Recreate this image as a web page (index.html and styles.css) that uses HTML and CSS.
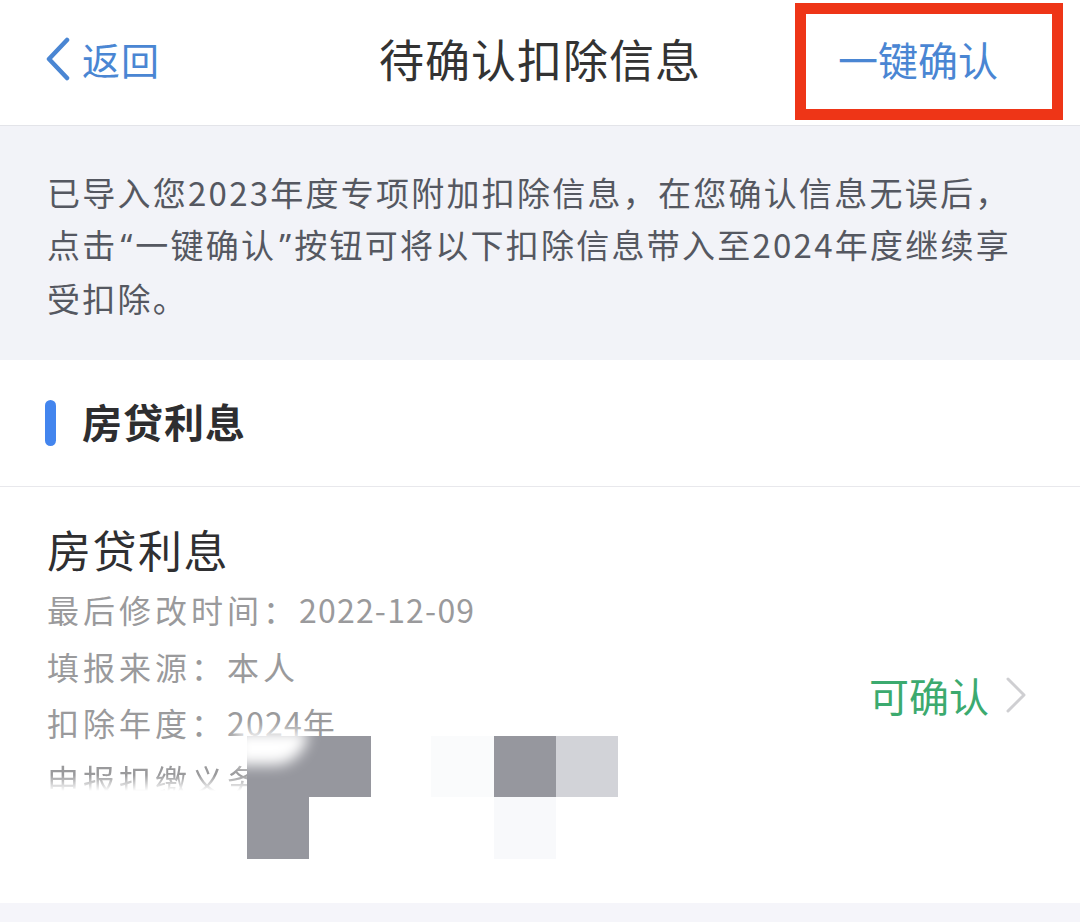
FILE: index.html
```html
<!DOCTYPE html>
<html lang="zh-CN">
<head>
<meta charset="utf-8">
<title>待确认扣除信息</title>
<link rel="stylesheet" href="styles.css">
</head>
<body>
<div class="page">
  <header class="navbar">
    <div class="nav-left">
      <svg class="back-icon" width="28" height="44" viewBox="0 0 28 44"><path d="M23 3 L5 22 L23 41" fill="none" stroke="#4a86d3" stroke-width="4.5" stroke-linecap="round" stroke-linejoin="round"/></svg>
      <span class="back-text">返回</span>
    </div>
    <div class="nav-title">待确认扣除信息</div>
    <div class="nav-right">
      <span class="confirm-all">一键确认</span>
    </div>
    <div class="highlight-box"></div>
  </header>

  <section class="notice">
    <div class="notice-line">已导入您2023年度专项附加扣除信息，在您确认信息无误后，</div>
    <div class="notice-line">点击<span class="q">“</span>一键确认<span class="q">”</span>按钮可将以下扣除信息带入至2024年度继续享</div>
    <div class="notice-line">受扣除。</div>
  </section>

  <section class="card">
    <div class="section-head">
      <span class="section-bar"></span>
      <span class="section-title">房贷利息</span>
    </div>
    <div class="item">
      <div class="item-body">
        <div class="item-title">房贷利息</div>
        <div class="item-line">最后修改时间：<span class="num">2022-12-09</span></div>
        <div class="item-line">填报来源：本人</div>
        <div class="item-line">扣除年度：<span class="num">2024</span>年</div>
        <div class="item-line item-cut">申报扣缴义务人：</div>
      </div>
      <div class="item-status">
        <span class="status-text">可确认</span>
        <svg class="chevron" width="22" height="36" viewBox="0 0 22 36"><path d="M3 2 L19 18 L3 34" fill="none" stroke="#cfcfd2" stroke-width="3" stroke-linecap="round" stroke-linejoin="round"/></svg>
      </div>
      <div class="mosaic">
        <span class="m m-a1"></span>
        <span class="m m-a2"></span>
        <span class="m m-smudge"></span>
        <span class="m m-b"></span>
        <span class="m m-c1"></span>
        <span class="m m-c2"></span>
        <span class="m m-d"></span>
      </div>
    </div>
  </section>
  <div class="footer-bg"></div>
</div>
</body>
</html>
```

FILE: styles.css
```css
* { box-sizing: border-box; }
html, body { margin: 0; padding: 0; }
body {
  background: #f5f5fa;
  font-family: "Noto Sans CJK SC", "Noto Sans", sans-serif;
  width: 1080px;
  height: 922px;
  overflow: hidden;
}
.page { width: 1080px; }

.navbar {
  position: relative;
  height: 126px;
  background: #fff;
  border-bottom: 1px solid #e3e4e9;
  display: grid;
  grid-template-columns: 1fr auto 1fr;
  align-items: center;
  padding-bottom: 8px;
}
.nav-left {
  display: flex;
  align-items: center;
  padding-left: 44px;
  gap: 10px;
}
.back-icon { display: block; }
.back-text {
  color: #4a86d3;
  font-size: 38px;
  line-height: 1;
  letter-spacing: 1px;
}
.nav-title {
  font-size: 45px;
  color: #333;
  letter-spacing: 1px;
  line-height: 1;
}
.nav-right {
  display: flex;
  justify-content: flex-end;
  padding-right: 82px;
}
.confirm-all {
  color: #4a86d3;
  font-size: 40px;
  line-height: 1;
}
.highlight-box {
  position: absolute;
  left: 795px;
  top: 3px;
  width: 268px;
  height: 117px;
  border: 11px solid #ee3517;
}

.notice {
  background: #f2f3f8;
  color: #555861;
  font-size: 33px;
  line-height: 52px;
  letter-spacing: 2.25px;
  padding: 40px 10px 38px 47px;
  height: 234px;
}
.notice-line { white-space: nowrap; }
.q {
  font-family: "Noto Sans", sans-serif;
  letter-spacing: 0;
  padding: 0 3px;
}

.card { background: #fff; }
.section-head {
  height: 127px;
  display: flex;
  align-items: center;
  padding-left: 45px;
  border-bottom: 1px solid #e8e8ec;
}
.section-bar {
  width: 11px;
  height: 46px;
  border-radius: 6px;
  background: #4385ee;
  margin-right: 26px;
}
.section-title {
  font-size: 40px;
  font-weight: 700;
  color: #2e2e30;
  line-height: 1;
  letter-spacing: 1px;
  margin-top: -4px;
}

.item {
  position: relative;
  height: 416px;
  display: flex;
  align-items: center;
  justify-content: space-between;
  padding: 0 53px 0 47px;
}
.item-body {
  align-self: flex-start;
  padding-top: 33px;
}
.item-title {
  font-size: 44px;
  line-height: 58px;
  color: #2f2f31;
  letter-spacing: 1.5px;
  margin-bottom: 3px;
}
.item-line {
  font-size: 32px;
  line-height: 56.5px;
  color: #9a9a9c;
  letter-spacing: 4px;
  white-space: nowrap;
}
.item-line .num { letter-spacing: 1.2px; }
.item-cut {
  height: 40px;
  overflow: hidden;
  -webkit-mask-image: linear-gradient(to bottom, #000 0, #000 60%, transparent 100%);
  mask-image: linear-gradient(to bottom, #000 0, #000 60%, transparent 100%);
}
.item-status {
  display: flex;
  align-items: center;
  gap: 16px;
}
.status-text {
  color: #3caa6f;
  font-size: 40px;
  line-height: 1;
}
.chevron { display: block; }

.mosaic { position: absolute; left: 0; top: 0; width: 0; height: 0; }
.m { position: absolute; display: block; }
.m-a1 { left: 247px; top: 249px; width: 124px; height: 61px; background: #96979e; }
.m-a2 { left: 247px; top: 310px; width: 62px; height: 62px; background: #96979e; }
.m-smudge {
  left: 236px; top: 244px; width: 72px; height: 34px;
  background: #fff;
  border-radius: 0 0 50px 0;
  filter: blur(7px);
}
.m-b { left: 431px; top: 249px; width: 63px; height: 61px; background: #fafbfc; }
.m-c1 { left: 494px; top: 249px; width: 62px; height: 61px; background: #96979e; }
.m-c2 { left: 556px; top: 249px; width: 62px; height: 61px; background: #d2d3d8; }
.m-d { left: 494px; top: 310px; width: 62px; height: 62px; background: #f8f9fb; }

.footer-bg { height: 20px; background: #f5f5fa; }
```
